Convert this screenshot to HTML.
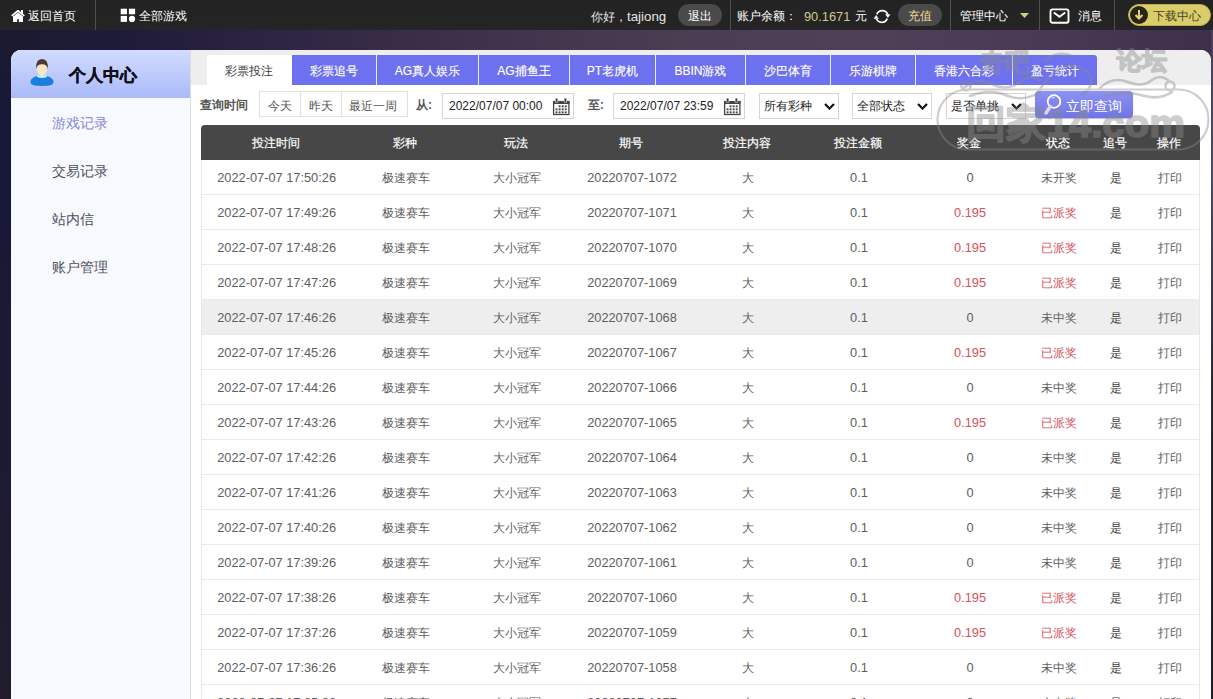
<!DOCTYPE html>
<html><head><meta charset="utf-8">
<style>
*{box-sizing:border-box;margin:0;padding:0}
html,body{width:1213px;height:699px;overflow:hidden}
body{font-family:"Liberation Sans",sans-serif;font-size:12px;font-weight:500;position:relative;
background:linear-gradient(90deg,#1c1a30 0%,#1e1b38 10%,#2c2442 22%,#3c2e48 35%,#4a3d52 55%,#4f4058 72%,#4a3a55 85%,#3f2f4b 100%);}
.lstrip{position:absolute;left:0;top:30px;width:11px;height:669px;background:linear-gradient(180deg,#1c1a30 0%,#171838 15%,#1a1a34 50%,#221c2e 100%)}
.rstrip{position:absolute;left:1211px;top:30px;width:2px;height:669px;background:linear-gradient(180deg,#4a3d58 0%,#4a4a6a 22%,#2a2430 55%,#1e1a22 100%)}
.top{position:absolute;left:0;top:0;width:1213px;height:30px;background:linear-gradient(180deg,#232323 0%,#242424 84%,#26242c 100%);color:#fff}
.top .t{position:absolute;top:9px;font-size:12px;line-height:15px;white-space:nowrap}
.sep{position:absolute;top:0;width:1px;height:30px;background:#505050}
.pill{position:absolute;top:4px;height:22px;border-radius:11px;background:#4a4a4a}
.panel{position:absolute;left:11px;top:50px;width:1200px;height:660px;background:#fff;border-radius:10px 10px 0 0}
.side{position:absolute;left:11px;top:50px;width:180px;height:660px;background:#f7f9ff;border-right:1px solid #dcdde3;border-radius:10px 0 0 0}
.sidehd{position:absolute;left:11px;top:50px;width:179px;height:48px;background:linear-gradient(180deg,#d2dcff 0%,#a9baf9 100%);border-radius:10px 0 0 0}
.sidehd .tt{position:absolute;left:58px;top:16px;font-size:17px;font-weight:bold;color:#10101a;line-height:20px;-webkit-text-stroke:0.35px #10101a}
.menu{position:absolute;left:52px;font-size:14px;color:#4d515c;line-height:16px;margin-top:-1px}
.tabbar{position:absolute;left:191px;top:50px;width:1020px;height:35px;background:#eeeeee;border-radius:0 10px 0 0}
.tab{position:absolute;top:55px;height:30px;background:#6e71ef;color:#fff;text-align:center;line-height:32px;font-size:12px;-webkit-text-stroke:0.15px #fff}
.tab.act{background:#fff;color:#3a3a3a;border-radius:3px 0 0 0;text-indent:-2px;-webkit-text-stroke:0}
.tab.last{border-radius:0 3px 0 0}
.lb{position:absolute;top:98px;font-weight:bold;color:#555;line-height:15px;font-size:12px}
.btns{position:absolute;left:259px;top:91px;height:26px;border:1px solid #e0e0e0;display:flex}
.btns span{display:block;height:24px;line-height:28px;text-align:center;border-right:1px solid #e0e0e0;color:#555}
.inp{position:absolute;top:93px;width:132px;height:26px;border:1px solid #d5d5d5;color:#222;font-size:12px}
.inp span{position:absolute;left:6px;top:5px;line-height:14px}
.inp svg{position:absolute;right:3px;top:4px}
.sel{position:absolute;top:93px;height:26px;border:1px solid #d5d5d5;color:#222}
.sel span{position:absolute;left:4px;top:5px;line-height:15px}
.sel svg{position:absolute;right:3px;top:9px}
.qbtn{position:absolute;left:1035px;top:91px;width:98px;height:27px;border-radius:4px;background:linear-gradient(180deg,#8c91f3,#7075e6);box-shadow:0 1px 1px rgba(60,60,140,0.35);color:#fff;font-size:14px}
.qbtn span{position:absolute;left:31px;top:7px;line-height:17px}
.c{position:absolute;width:140px;text-align:center;white-space:nowrap}
.thead{position:absolute;left:201px;top:125px;width:999px;height:35px;background:#474747;border-radius:4px 4px 0 0;color:#fff}
.thead .c{top:11px;line-height:15px;-webkit-text-stroke:0.2px #fff}
.tbody{position:absolute;left:201px;top:160px;width:999px}
.row{position:relative;height:35px;border-left:1px solid #e6e6e6;border-right:1px solid #e6e6e6;border-bottom:1px solid #ebebeb;color:#5e5e5e}
.row .c{top:11px;line-height:15px;margin-left:0px}
.row.hov{background:#eeeeee}
.red{color:#d9505a}
.dk{color:#3a3a3a}
.n{font-size:12.8px;margin-top:-1px}

</style></head><body>
<div class="lstrip"></div><div class="rstrip"></div>
<div class="top">
  <svg style="position:absolute;left:11px;top:10px" width="14" height="12" viewBox="0 0 14 12"><path d="M2 6.4 L7 2.4 L12 6.4 L12 12 L2 12 Z" fill="#fff"/><rect x="6.2" y="9.2" width="1.7" height="2.8" fill="#222"/><path d="M0.7 5.9 L7 0.7 L13.3 5.9" stroke="#fff" stroke-width="1.8" fill="none"/><rect x="10" y="0" width="2" height="4" fill="#fff"/></svg>
  <span class="t" style="left:28px">返回首页</span>
  <div class="sep" style="left:95px"></div>
  <svg style="position:absolute;left:120px;top:8px" width="16" height="15" viewBox="0 0 16 15"><rect x="0.7" y="0.7" width="6.3" height="5.6" fill="#fff"/><rect x="8.9" y="0.7" width="6.2" height="5.6" fill="#fff"/><rect x="0.7" y="7.9" width="6.3" height="6" fill="#fff"/><circle cx="12" cy="10.9" r="3.1" fill="#fff"/></svg>
  <span class="t" style="left:139px">全部游戏</span>

  <span class="t" style="left:591px;color:#e6e6e6">你好，<span style="font-size:13.3px">tajiong</span></span>
  <div class="pill" style="left:678px;width:44px"></div>
  <span class="t" style="left:688px">退出</span>
  <div class="sep" style="left:730px"></div>
  <span class="t" style="left:737px">账户余额：</span>
  <span class="t" style="left:804px;color:#d2c98e;font-size:12.8px">90.1671</span>
  <span class="t" style="left:855px">元</span>
  <svg style="position:absolute;left:873px;top:8px" width="18" height="17" viewBox="0 0 18 17"><path d="M3.8 6.4 A5.8 5.8 0 0 1 14.6 6.2" stroke="#fff" stroke-width="1.7" fill="none"/><path d="M14.2 10.6 A5.8 5.8 0 0 1 3.4 10.8" stroke="#fff" stroke-width="1.7" fill="none"/><path d="M12.2 6.2 L17.4 6.2 L14.8 10 Z" fill="#fff"/><path d="M5.8 10.8 L0.6 10.8 L3.2 7 Z" fill="#fff"/></svg>
  <div class="pill" style="left:898px;width:44px"></div>
  <span class="t" style="left:908px;color:#eedc98">充值</span>
  <div class="sep" style="left:950px"></div>
  <span class="t" style="left:960px">管理中心</span>
  <svg style="position:absolute;left:1020px;top:13px" width="9" height="5" viewBox="0 0 9 5"><path d="M0 0 L9 0 L4.5 5 Z" fill="#d6cb84"/></svg>
  <div class="sep" style="left:1039px"></div>
  <svg style="position:absolute;left:1049px;top:8px" width="21" height="16" viewBox="0 0 21 16"><rect x="1.5" y="1.4" width="18" height="13.3" rx="2" stroke="#fff" stroke-width="1.9" fill="none"/><path d="M4.8 4.6 L10.5 8.8 L16.2 4.6" stroke="#fff" stroke-width="1.9" fill="none"/></svg>
  <span class="t" style="left:1078px">消息</span>
  <div class="sep" style="left:1114px"></div>
  <div style="position:absolute;left:1128px;top:4px;width:83px;height:22px;border-radius:11px;background:#dacd6c;border:1px solid #b9ad50"></div>
  <svg style="position:absolute;left:1130px;top:6px" width="18" height="18" viewBox="0 0 18 18"><circle cx="9" cy="9" r="9" fill="#2a2418"/><path d="M9 4 L9 12 M5.5 9 L9 12.5 L12.5 9" stroke="#e0d27a" stroke-width="2" fill="none"/></svg>
  <span class="t" style="left:1153px;color:#4b4222">下载中心</span>
</div>

<div class="panel"></div>
<div class="side"></div>
<div class="sidehd">
  <svg style="position:absolute;left:19px;top:9px" width="24" height="28" viewBox="0 0 24 28"><path d="M0.5 23.5 Q0.5 16.8 12 16.5 Q23.5 16.8 23.5 23.5 Q23.5 27 12 27 Q0.5 27 0.5 23.5 Z" fill="#1a7fe0"/><ellipse cx="12" cy="17.3" rx="5" ry="1.6" fill="#c8ecfb"/><ellipse cx="12" cy="10" rx="5" ry="6.5" fill="#fbe6c2"/><path d="M6.3 10 Q5.5 0 12 0 Q18.8 0 17.6 10 Q17 5 12 5.2 Q7 5 6.3 10 Z" fill="#4b3a2e"/></svg>
  <div class="tt">个人中心</div>
</div>
<div class="menu" style="top:116px;color:#8586d6">游戏记录</div>
<div class="menu" style="top:164px">交易记录</div>
<div class="menu" style="top:212px">站内信</div>
<div class="menu" style="top:260px">账户管理</div>
<div class="tabbar"></div>
<div class="tab act" style="left:207px;width:85px">彩票投注</div><div class="tab" style="left:292px;width:84px">彩票追号</div><div class="tab" style="left:377px;width:101px">AG真人娱乐</div><div class="tab" style="left:479px;width:90px">AG捕鱼王</div><div class="tab" style="left:570px;width:85px">PT老虎机</div><div class="tab" style="left:656px;width:89px">BBIN游戏</div><div class="tab" style="left:746px;width:84px">沙巴体育</div><div class="tab" style="left:831px;width:84px">乐游棋牌</div><div class="tab" style="left:916px;width:96px">香港六合彩</div><div class="tab last" style="left:1013px;width:84px">盈亏统计</div>
<div class="flt">
  <span class="lb" style="left:200px">查询时间</span>
  <div class="btns"><span style="width:41px">今天</span><span style="width:41px">昨天</span><span style="width:65px;border-right:0;text-indent:-3px">最近一周</span></div>
  <span class="lb" style="left:416px">从:</span>
  <div class="inp" style="left:442px"><span>2022/07/07 00:00</span><svg width="18" height="18" viewBox="0 0 18 18"><rect x="1" y="3" width="16.5" height="3" fill="#444"/><rect x="1.6" y="3.6" width="15.3" height="12.9" stroke="#444" stroke-width="1.3" fill="none"/><rect x="3" y="0" width="3.2" height="4.4" fill="#fff"/><rect x="11.8" y="0" width="3.2" height="4.4" fill="#fff"/><rect x="3.6" y="0.4" width="2" height="3.6" fill="#444"/><rect x="12.4" y="0.4" width="2" height="3.6" fill="#444"/><rect x="6.65" y="7.40" width="1.9" height="1.9" fill="#444"/><rect x="9.70" y="7.40" width="1.9" height="1.9" fill="#444"/><rect x="12.75" y="7.40" width="1.9" height="1.9" fill="#444"/><rect x="3.60" y="10.40" width="1.9" height="1.9" fill="#444"/><rect x="6.65" y="10.40" width="1.9" height="1.9" fill="#444"/><rect x="9.70" y="10.40" width="1.9" height="1.9" fill="#444"/><rect x="12.75" y="10.40" width="1.9" height="1.9" fill="#444"/><rect x="3.60" y="13.40" width="1.9" height="1.9" fill="#444"/><rect x="6.65" y="13.40" width="1.9" height="1.9" fill="#444"/><rect x="9.70" y="13.40" width="1.9" height="1.9" fill="#444"/><rect x="12.75" y="13.40" width="1.9" height="1.9" fill="#444"/></svg></div>
  <span class="lb" style="left:588px">至:</span>
  <div class="inp" style="left:613px"><span>2022/07/07 23:59</span><svg width="18" height="18" viewBox="0 0 18 18"><rect x="1" y="3" width="16.5" height="3" fill="#444"/><rect x="1.6" y="3.6" width="15.3" height="12.9" stroke="#444" stroke-width="1.3" fill="none"/><rect x="3" y="0" width="3.2" height="4.4" fill="#fff"/><rect x="11.8" y="0" width="3.2" height="4.4" fill="#fff"/><rect x="3.6" y="0.4" width="2" height="3.6" fill="#444"/><rect x="12.4" y="0.4" width="2" height="3.6" fill="#444"/><rect x="6.65" y="7.40" width="1.9" height="1.9" fill="#444"/><rect x="9.70" y="7.40" width="1.9" height="1.9" fill="#444"/><rect x="12.75" y="7.40" width="1.9" height="1.9" fill="#444"/><rect x="3.60" y="10.40" width="1.9" height="1.9" fill="#444"/><rect x="6.65" y="10.40" width="1.9" height="1.9" fill="#444"/><rect x="9.70" y="10.40" width="1.9" height="1.9" fill="#444"/><rect x="12.75" y="10.40" width="1.9" height="1.9" fill="#444"/><rect x="3.60" y="13.40" width="1.9" height="1.9" fill="#444"/><rect x="6.65" y="13.40" width="1.9" height="1.9" fill="#444"/><rect x="9.70" y="13.40" width="1.9" height="1.9" fill="#444"/><rect x="12.75" y="13.40" width="1.9" height="1.9" fill="#444"/></svg></div>
  <div class="sel" style="left:759px;width:80px"><span>所有彩种</span><svg width="11" height="7" viewBox="0 0 11 7"><path d="M1 1 L5.5 5.5 L10 1" stroke="#111" stroke-width="2.2" fill="none"/></svg></div>
  <div class="sel" style="left:852px;width:80px"><span>全部状态</span><svg width="11" height="7" viewBox="0 0 11 7"><path d="M1 1 L5.5 5.5 L10 1" stroke="#111" stroke-width="2.2" fill="none"/></svg></div>
  <div class="sel" style="left:946px;width:80px"><span>是否单挑</span><svg width="11" height="7" viewBox="0 0 11 7"><path d="M1 1 L5.5 5.5 L10 1" stroke="#111" stroke-width="2.2" fill="none"/></svg></div>
  <div class="qbtn"><svg style="position:absolute;left:8px;top:2px" width="18" height="23" viewBox="0 0 18 23"><circle cx="11" cy="8.5" r="6.3" stroke="#fff" stroke-width="1.8" fill="none"/><path d="M7.3 13.5 L3 20" stroke="#d8d8e8" stroke-width="3.5" stroke-linecap="round"/><path d="M9 5.5 Q10 4.5 11.5 4.5" stroke="#fff" stroke-width="1" fill="none"/></svg><span>立即查询</span></div>
</div>
<div class="thead"><span class="c" style="left:4.6px">投注时间</span><span class="c" style="left:134.3px">彩种</span><span class="c" style="left:245.0px">玩法</span><span class="c" style="left:360.0px">期号</span><span class="c" style="left:476.0px">投注内容</span><span class="c" style="left:587.0px">投注金额</span><span class="c" style="left:698.0px">奖金</span><span class="c" style="left:786.5px">状态</span><span class="c" style="left:843.5px">追号</span><span class="c" style="left:898.0px">操作</span></div>
<div class="tbody">
<div class="row"><span class="c n" style="left:4.6px">2022-07-07 17:50:26</span><span class="c" style="left:134.3px">极速赛车</span><span class="c" style="left:245.0px">大小冠军</span><span class="c n" style="left:360.0px">20220707-1072</span><span class="c" style="left:476.0px">大</span><span class="c n" style="left:587.0px">0.1</span><span class="c n" style="left:698.0px">0</span><span class="c" style="left:786.5px">未开奖</span><span class="c dk" style="left:843.5px">是</span><span class="c" style="left:898.0px">打印</span></div>
<div class="row"><span class="c n" style="left:4.6px">2022-07-07 17:49:26</span><span class="c" style="left:134.3px">极速赛车</span><span class="c" style="left:245.0px">大小冠军</span><span class="c n" style="left:360.0px">20220707-1071</span><span class="c" style="left:476.0px">大</span><span class="c n" style="left:587.0px">0.1</span><span class="c red n" style="left:698.0px">0.195</span><span class="c red" style="left:786.5px">已派奖</span><span class="c dk" style="left:843.5px">是</span><span class="c" style="left:898.0px">打印</span></div>
<div class="row"><span class="c n" style="left:4.6px">2022-07-07 17:48:26</span><span class="c" style="left:134.3px">极速赛车</span><span class="c" style="left:245.0px">大小冠军</span><span class="c n" style="left:360.0px">20220707-1070</span><span class="c" style="left:476.0px">大</span><span class="c n" style="left:587.0px">0.1</span><span class="c red n" style="left:698.0px">0.195</span><span class="c red" style="left:786.5px">已派奖</span><span class="c dk" style="left:843.5px">是</span><span class="c" style="left:898.0px">打印</span></div>
<div class="row"><span class="c n" style="left:4.6px">2022-07-07 17:47:26</span><span class="c" style="left:134.3px">极速赛车</span><span class="c" style="left:245.0px">大小冠军</span><span class="c n" style="left:360.0px">20220707-1069</span><span class="c" style="left:476.0px">大</span><span class="c n" style="left:587.0px">0.1</span><span class="c red n" style="left:698.0px">0.195</span><span class="c red" style="left:786.5px">已派奖</span><span class="c dk" style="left:843.5px">是</span><span class="c" style="left:898.0px">打印</span></div>
<div class="row hov"><span class="c n" style="left:4.6px">2022-07-07 17:46:26</span><span class="c" style="left:134.3px">极速赛车</span><span class="c" style="left:245.0px">大小冠军</span><span class="c n" style="left:360.0px">20220707-1068</span><span class="c" style="left:476.0px">大</span><span class="c n" style="left:587.0px">0.1</span><span class="c n" style="left:698.0px">0</span><span class="c" style="left:786.5px">未中奖</span><span class="c dk" style="left:843.5px">是</span><span class="c" style="left:898.0px">打印</span></div>
<div class="row"><span class="c n" style="left:4.6px">2022-07-07 17:45:26</span><span class="c" style="left:134.3px">极速赛车</span><span class="c" style="left:245.0px">大小冠军</span><span class="c n" style="left:360.0px">20220707-1067</span><span class="c" style="left:476.0px">大</span><span class="c n" style="left:587.0px">0.1</span><span class="c red n" style="left:698.0px">0.195</span><span class="c red" style="left:786.5px">已派奖</span><span class="c dk" style="left:843.5px">是</span><span class="c" style="left:898.0px">打印</span></div>
<div class="row"><span class="c n" style="left:4.6px">2022-07-07 17:44:26</span><span class="c" style="left:134.3px">极速赛车</span><span class="c" style="left:245.0px">大小冠军</span><span class="c n" style="left:360.0px">20220707-1066</span><span class="c" style="left:476.0px">大</span><span class="c n" style="left:587.0px">0.1</span><span class="c n" style="left:698.0px">0</span><span class="c" style="left:786.5px">未中奖</span><span class="c dk" style="left:843.5px">是</span><span class="c" style="left:898.0px">打印</span></div>
<div class="row"><span class="c n" style="left:4.6px">2022-07-07 17:43:26</span><span class="c" style="left:134.3px">极速赛车</span><span class="c" style="left:245.0px">大小冠军</span><span class="c n" style="left:360.0px">20220707-1065</span><span class="c" style="left:476.0px">大</span><span class="c n" style="left:587.0px">0.1</span><span class="c red n" style="left:698.0px">0.195</span><span class="c red" style="left:786.5px">已派奖</span><span class="c dk" style="left:843.5px">是</span><span class="c" style="left:898.0px">打印</span></div>
<div class="row"><span class="c n" style="left:4.6px">2022-07-07 17:42:26</span><span class="c" style="left:134.3px">极速赛车</span><span class="c" style="left:245.0px">大小冠军</span><span class="c n" style="left:360.0px">20220707-1064</span><span class="c" style="left:476.0px">大</span><span class="c n" style="left:587.0px">0.1</span><span class="c n" style="left:698.0px">0</span><span class="c" style="left:786.5px">未中奖</span><span class="c dk" style="left:843.5px">是</span><span class="c" style="left:898.0px">打印</span></div>
<div class="row"><span class="c n" style="left:4.6px">2022-07-07 17:41:26</span><span class="c" style="left:134.3px">极速赛车</span><span class="c" style="left:245.0px">大小冠军</span><span class="c n" style="left:360.0px">20220707-1063</span><span class="c" style="left:476.0px">大</span><span class="c n" style="left:587.0px">0.1</span><span class="c n" style="left:698.0px">0</span><span class="c" style="left:786.5px">未中奖</span><span class="c dk" style="left:843.5px">是</span><span class="c" style="left:898.0px">打印</span></div>
<div class="row"><span class="c n" style="left:4.6px">2022-07-07 17:40:26</span><span class="c" style="left:134.3px">极速赛车</span><span class="c" style="left:245.0px">大小冠军</span><span class="c n" style="left:360.0px">20220707-1062</span><span class="c" style="left:476.0px">大</span><span class="c n" style="left:587.0px">0.1</span><span class="c n" style="left:698.0px">0</span><span class="c" style="left:786.5px">未中奖</span><span class="c dk" style="left:843.5px">是</span><span class="c" style="left:898.0px">打印</span></div>
<div class="row"><span class="c n" style="left:4.6px">2022-07-07 17:39:26</span><span class="c" style="left:134.3px">极速赛车</span><span class="c" style="left:245.0px">大小冠军</span><span class="c n" style="left:360.0px">20220707-1061</span><span class="c" style="left:476.0px">大</span><span class="c n" style="left:587.0px">0.1</span><span class="c n" style="left:698.0px">0</span><span class="c" style="left:786.5px">未中奖</span><span class="c dk" style="left:843.5px">是</span><span class="c" style="left:898.0px">打印</span></div>
<div class="row"><span class="c n" style="left:4.6px">2022-07-07 17:38:26</span><span class="c" style="left:134.3px">极速赛车</span><span class="c" style="left:245.0px">大小冠军</span><span class="c n" style="left:360.0px">20220707-1060</span><span class="c" style="left:476.0px">大</span><span class="c n" style="left:587.0px">0.1</span><span class="c red n" style="left:698.0px">0.195</span><span class="c red" style="left:786.5px">已派奖</span><span class="c dk" style="left:843.5px">是</span><span class="c" style="left:898.0px">打印</span></div>
<div class="row"><span class="c n" style="left:4.6px">2022-07-07 17:37:26</span><span class="c" style="left:134.3px">极速赛车</span><span class="c" style="left:245.0px">大小冠军</span><span class="c n" style="left:360.0px">20220707-1059</span><span class="c" style="left:476.0px">大</span><span class="c n" style="left:587.0px">0.1</span><span class="c red n" style="left:698.0px">0.195</span><span class="c red" style="left:786.5px">已派奖</span><span class="c dk" style="left:843.5px">是</span><span class="c" style="left:898.0px">打印</span></div>
<div class="row"><span class="c n" style="left:4.6px">2022-07-07 17:36:26</span><span class="c" style="left:134.3px">极速赛车</span><span class="c" style="left:245.0px">大小冠军</span><span class="c n" style="left:360.0px">20220707-1058</span><span class="c" style="left:476.0px">大</span><span class="c n" style="left:587.0px">0.1</span><span class="c n" style="left:698.0px">0</span><span class="c" style="left:786.5px">未中奖</span><span class="c dk" style="left:843.5px">是</span><span class="c" style="left:898.0px">打印</span></div>
<div class="row"><span class="c n" style="left:4.6px">2022-07-07 17:35:26</span><span class="c" style="left:134.3px">极速赛车</span><span class="c" style="left:245.0px">大小冠军</span><span class="c n" style="left:360.0px">20220707-1057</span><span class="c" style="left:476.0px">大</span><span class="c n" style="left:587.0px">0.1</span><span class="c n" style="left:698.0px">0</span><span class="c" style="left:786.5px">未中奖</span><span class="c dk" style="left:843.5px">是</span><span class="c" style="left:898.0px">打印</span></div>
</div>
<svg style="position:absolute;left:0;top:0;pointer-events:none" width="1213" height="699" viewBox="0 0 1213 699">
<g opacity="0.42" fill="#8a8a8a" stroke="none" font-family="Liberation Sans" font-weight="bold">
<rect x="937.5" y="89.5" width="271" height="60" rx="30" fill="none" stroke="#8a8a8a" stroke-width="2.2"/>
<g stroke="#8a8a8a" stroke-width="1.6" stroke-linejoin="round"><text x="966" y="136.5" font-size="39" textLength="219" lengthAdjust="spacingAndGlyphs">回家14.com</text>
<text x="980" y="71" font-size="25" textLength="49" lengthAdjust="spacingAndGlyphs">奇吧</text>
<text x="1117" y="69" font-size="25" textLength="50" lengthAdjust="spacingAndGlyphs">论坛</text></g>
<g fill="none" stroke="#8a8a8a" stroke-width="2.6" stroke-linecap="round">
<path d="M962 90 Q975 76 992 84 Q1006 92 1020 82 Q1030 74 1040 80"/>
<path d="M970 96 Q990 88 1008 96 Q1024 102 1040 92"/>
<path d="M1036 96 Q1050 70 1068 66 Q1084 64 1090 76 Q1094 88 1082 94"/>
<path d="M1045 60 Q1058 50 1072 56"/>
<path d="M1100 88 Q1112 76 1128 82 Q1142 88 1152 80 Q1160 74 1168 80"/>
<path d="M1105 96 Q1125 90 1145 96 Q1160 100 1172 92"/>
<circle cx="1170" cy="86" r="4.5"/>
<circle cx="966" cy="86" r="4.5"/>
</g>
</g>
</svg>
</body></html>
